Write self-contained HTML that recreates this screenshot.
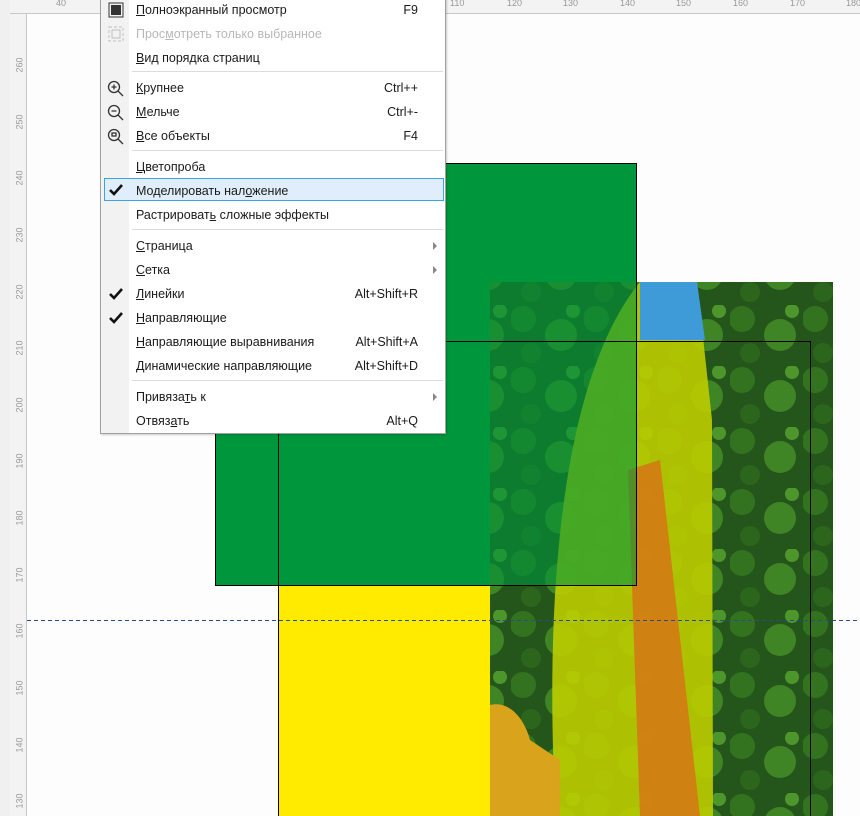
<!DOCTYPE html>
<html><head><meta charset="utf-8"><style>
*{margin:0;padding:0;box-sizing:border-box}
body{width:860px;height:816px;overflow:hidden;background:#fdfdfd;position:relative;font-family:"Liberation Sans","DejaVu Sans",sans-serif}
.abs{position:absolute}
.menu{left:100px;top:-2px;width:346px;height:436px;background:#fff;border:1px solid #a0a0a0;box-shadow:1px 1px 2px rgba(0,0,0,.2)}
.gut{left:0;top:0;width:28px;height:100%;background:#f2f2f2}
.it{position:absolute;left:35px;font-size:12.5px;color:#1a1a1a;white-space:nowrap;line-height:16px}
.sc{position:absolute;right:27px;font-size:12.5px;color:#1a1a1a;line-height:16px}
.sep{position:absolute;left:31px;right:2px;height:1px;background:#dcdcdc}
.ar{position:absolute;right:8px;width:0;height:0;border-left:4px solid #888;border-top:4px solid transparent;border-bottom:4px solid transparent}
u{text-decoration:underline}
</style></head><body>
<div class="abs" style="left:0;top:0;width:10px;height:816px;background:#f0f0f0"></div>
<div class="abs" style="left:10px;top:0;width:17px;height:816px;background:#f3f3f3;border-right:1px solid #c8c8c8"></div>
<div class="abs" style="left:10px;top:0;width:850px;height:14px;background:#f3f3f3;border-bottom:1px solid #c8c8c8"></div>
<div class="abs" style="left:0;top:0;width:860px;height:14px;font-size:9px;color:#999">
<span class="abs" style="left:56px;top:-2px">40</span><span class="abs" style="left:450px;top:-2px">110</span><span class="abs" style="left:507px;top:-2px">120</span><span class="abs" style="left:563px;top:-2px">130</span><span class="abs" style="left:620px;top:-2px">140</span><span class="abs" style="left:676px;top:-2px">150</span><span class="abs" style="left:733px;top:-2px">160</span><span class="abs" style="left:790px;top:-2px">170</span><span class="abs" style="left:846px;top:-2px">180</span>
</div>
<div class="abs" style="left:0;top:0;width:27px;height:816px;font-size:9px;color:#999">
<span class="abs" style="left:12px;top:60px;transform:rotate(-90deg)">260</span>
<span class="abs" style="left:12px;top:117px;transform:rotate(-90deg)">250</span>
<span class="abs" style="left:12px;top:173px;transform:rotate(-90deg)">240</span>
<span class="abs" style="left:12px;top:230px;transform:rotate(-90deg)">230</span>
<span class="abs" style="left:12px;top:287px;transform:rotate(-90deg)">220</span>
<span class="abs" style="left:12px;top:343px;transform:rotate(-90deg)">210</span>
<span class="abs" style="left:12px;top:400px;transform:rotate(-90deg)">200</span>
<span class="abs" style="left:12px;top:456px;transform:rotate(-90deg)">190</span>
<span class="abs" style="left:12px;top:513px;transform:rotate(-90deg)">180</span>
<span class="abs" style="left:12px;top:570px;transform:rotate(-90deg)">170</span>
<span class="abs" style="left:12px;top:626px;transform:rotate(-90deg)">160</span>
<span class="abs" style="left:12px;top:683px;transform:rotate(-90deg)">150</span>
<span class="abs" style="left:12px;top:740px;transform:rotate(-90deg)">140</span>
<span class="abs" style="left:12px;top:796px;transform:rotate(-90deg)">130</span>
</div>
<svg class="abs" style="left:0;top:0" width="860" height="816">
<defs>
<pattern id="lv" width="73" height="61" patternUnits="userSpaceOnUse">
<rect width="73" height="61" fill="#24561b"/>
<circle cx="12" cy="14" r="13" fill="#33731f"/><circle cx="50" cy="30" r="16" fill="#3f8425"/><circle cx="20" cy="48" r="10" fill="#2c651c"/><circle cx="62" cy="6" r="7" fill="#4d962b"/>
</pattern>
</defs>
<rect x="278" y="586" width="212" height="230" fill="#ffeb00"/>
<rect x="215" y="163" width="422" height="423" fill="#00963c"/>
<rect x="490" y="282" width="343" height="534" fill="url(#lv)"/>
<path d="M555 800 C545 600 560 380 640 282 L697 282 L712 420 L713 816 L560 816Z" fill="#bccd00" opacity=".9"/>
<path d="M640 282 L697 282 L705 340 L640 340Z" fill="#3e9bd8"/>
<path d="M628 470 L660 460 L700 816 L640 816Z" fill="#dd6518" opacity=".7"/>
<path d="M490 705 C510 700 525 720 530 740 L560 760 L560 816 L490 816Z" fill="#d9a31c"/>
<rect x="490" y="282" width="147" height="304" fill="#00963c" opacity=".6"/>
<rect x="215.5" y="163.5" width="421" height="422" fill="none" stroke="#000"/>
<rect x="278.5" y="341.5" width="532" height="500" fill="none" stroke="#000"/>
<line x1="27" y1="620.5" x2="860" y2="620.5" stroke="#2c4a8a" stroke-dasharray="4,3"/>
</svg>
<div class="abs menu">
<div class="abs gut"></div>
<svg class="abs" style="left:7px;top:3px" width="16" height="16"><rect x="1" y="1" width="14" height="14" fill="none" stroke="#333"/><rect x="3" y="3" width="10" height="10" fill="#333"/></svg>
<svg class="abs" style="left:7px;top:27px" width="16" height="16" opacity=".35"><rect x="1" y="1" width="14" height="14" fill="none" stroke="#666" stroke-dasharray="3,2"/><rect x="4" y="4" width="8" height="8" fill="none" stroke="#666"/></svg>
<div class="it" style="top:3px"><u>П</u>олноэкранный просмотр</div><div class="sc" style="top:3px">F9</div>
<div class="it" style="top:27px;color:#b8b8b8">Прос<u>м</u>отреть только выбранное</div>
<div class="it" style="top:51px"><u>В</u>ид порядка страниц</div>
<div class="sep" style="top:72px"></div>
<svg class="abs" style="left:6px;top:81px" width="18" height="66" fill="none" stroke="#333" stroke-width="1.3"><circle cx="7" cy="7" r="5.5"/><path d="M11 11l5 5M4.5 7h5M7 4.5v5"/><circle cx="7" cy="31" r="5.5"/><path d="M11 35l5 5M4.5 31h5"/><circle cx="7" cy="55" r="5.5"/><path d="M11 59l5 5"/><rect x="5" y="53" width="4" height="3"/></svg>
<div class="it" style="top:81px"><u>К</u>рупнее</div><div class="sc" style="top:81px">Ctrl++</div>
<div class="it" style="top:105px"><u>М</u>ельче</div><div class="sc" style="top:105px">Ctrl+-</div>
<div class="it" style="top:129px"><u>В</u>се объекты</div><div class="sc" style="top:129px">F4</div>
<div class="sep" style="top:151px"></div>
<div class="it" style="top:160px"><u>Ц</u>ветопроба</div>
<div class="abs" style="left:3px;top:179px;width:340px;height:23px;background:#e0eefb;border:1px solid #3ba2e4"></div>
<svg class="abs" style="left:7px;top:183px" width="16" height="16"><path d="M2 8l4 4 8-9" fill="none" stroke="#111" stroke-width="2.6"/></svg>
<div class="it" style="top:184px">Моделировать нал<u>о</u>жение</div>
<div class="it" style="top:208px">Растрироват<u>ь</u> сложные эффекты</div>
<div class="sep" style="top:230px"></div>
<div class="it" style="top:239px"><u>С</u>траница</div><div class="ar" style="top:243px"></div>
<div class="it" style="top:263px"><u>С</u>етка</div><div class="ar" style="top:267px"></div>
<svg class="abs" style="left:7px;top:287px" width="16" height="16"><path d="M2 8l4 4 8-9" fill="none" stroke="#111" stroke-width="2.6"/></svg>
<div class="it" style="top:287px"><u>Л</u>инейки</div><div class="sc" style="top:287px">Alt+Shift+R</div>
<svg class="abs" style="left:7px;top:311px" width="16" height="16"><path d="M2 8l4 4 8-9" fill="none" stroke="#111" stroke-width="2.6"/></svg>
<div class="it" style="top:311px"><u>Н</u>аправляющие</div>
<div class="it" style="top:335px"><u>Н</u>аправляющие выравнивания</div><div class="sc" style="top:335px">Alt+Shift+A</div>
<div class="it" style="top:359px"><u>Д</u>инамические направляющие</div><div class="sc" style="top:359px">Alt+Shift+D</div>
<div class="sep" style="top:381px"></div>
<div class="it" style="top:390px">Привяза<u>т</u>ь к</div><div class="ar" style="top:394px"></div>
<div class="it" style="top:414px">Отвяз<u>а</u>ть</div><div class="sc" style="top:414px">Alt+Q</div>
</div>
</body></html>
